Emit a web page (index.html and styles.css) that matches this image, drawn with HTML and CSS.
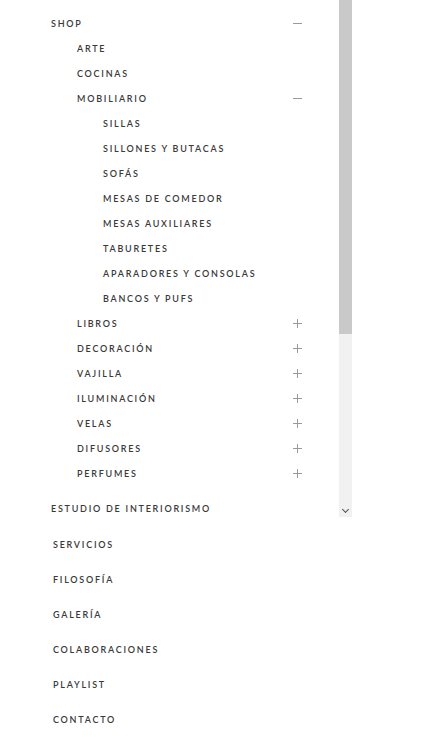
FILE: index.html
```html
<!DOCTYPE html>
<html lang="es">
<head>
<meta charset="utf-8">
<title>Menú</title>
<link rel="stylesheet" href="styles.css">
</head>
<body>
<nav class="menu">
  <div class="scroll-area">
    <ul class="scroll-list">
      <li class="row lvl1"><span>SHOP</span><span class="minus"></span></li>
      <li class="row lvl2"><span>ARTE</span></li>
      <li class="row lvl2"><span>COCINAS</span></li>
      <li class="row lvl2"><span>MOBILIARIO</span><span class="minus"></span></li>
      <li class="row lvl3"><span>SILLAS</span></li>
      <li class="row lvl3"><span>SILLONES Y BUTACAS</span></li>
      <li class="row lvl3"><span>SOFÁS</span></li>
      <li class="row lvl3"><span>MESAS DE COMEDOR</span></li>
      <li class="row lvl3"><span>MESAS AUXILIARES</span></li>
      <li class="row lvl3"><span>TABURETES</span></li>
      <li class="row lvl3"><span>APARADORES Y CONSOLAS</span></li>
      <li class="row lvl3"><span>BANCOS Y PUFS</span></li>
      <li class="row lvl2"><span>LIBROS</span><span class="plus"></span></li>
      <li class="row lvl2"><span>DECORACIÓN</span><span class="plus"></span></li>
      <li class="row lvl2"><span>VAJILLA</span><span class="plus"></span></li>
      <li class="row lvl2"><span>ILUMINACIÓN</span><span class="plus"></span></li>
      <li class="row lvl2"><span>VELAS</span><span class="plus"></span></li>
      <li class="row lvl2"><span>DIFUSORES</span><span class="plus"></span></li>
      <li class="row lvl2"><span>PERFUMES</span><span class="plus"></span></li>
      <li class="row top first-top"><span>ESTUDIO DE INTERIORISMO</span></li>
    </ul>
    <div class="scrollbar">
      <div class="thumb"></div>
      <div class="track"><span class="arrow"></span></div>
    </div>
  </div>
  <ul class="main-list">
    <li class="row top"><span>SERVICIOS</span></li>
    <li class="row top"><span>FILOSOFÍA</span></li>
    <li class="row top"><span>GALERÍA</span></li>
    <li class="row top"><span>COLABORACIONES</span></li>
    <li class="row top"><span>PLAYLIST</span></li>
    <li class="row top"><span>CONTACTO</span></li>
  </ul>
</nav>
</body>
</html>
```
FILE: styles.css
```css
* { box-sizing: border-box; }
html, body { margin: 0; padding: 0; background: #fff; }
body {
  font-family: Lato, "Open Sans", sans-serif;
  font-size: 9px;
  font-weight: 600;
  letter-spacing: 1.75px;
  color: #3a3a3a;
}
ul { list-style: none; margin: 0; padding: 0; }

.menu { width: 352px; }

.scroll-area {
  display: flex;
  height: 517px;
  overflow: hidden;
}
.scroll-list {
  flex: 1;
  padding: 10.5px 37px 0 51px;
}
.row {
  display: flex;
  align-items: center;
  justify-content: space-between;
  height: 25px;
  white-space: nowrap;
}
.lvl2 { padding-left: 26px; }
.lvl3 { padding-left: 52px; }
.top { height: 35px; }
.first-top { margin-top: 5px; }

.minus, .plus {
  position: relative;
  width: 9px;
  height: 9px;
  flex: none;
}
.minus::before, .plus::before, .plus::after {
  content: "";
  position: absolute;
  background: #9a9a9a;
}
.minus::before, .plus::before {
  left: 0; right: 0; top: 4px; height: 1px;
}
.plus::after {
  top: 0; bottom: 0; left: 4px; width: 1px;
}

.scrollbar {
  width: 13px;
  flex: none;
  display: flex;
  flex-direction: column;
}
.thumb { height: 334px; background: #c9c9c9; }
.track {
  flex: 1;
  background: #f1f1f1;
  display: flex;
  align-items: flex-end;
  justify-content: center;
  padding-bottom: 5px;
}
.arrow {
  width: 5px;
  height: 5px;
  border-right: 1.6px solid #505050;
  border-bottom: 1.6px solid #505050;
  transform: rotate(45deg);
}

.main-list {
  margin-top: 9.5px;
  padding-left: 53px;
}
```
